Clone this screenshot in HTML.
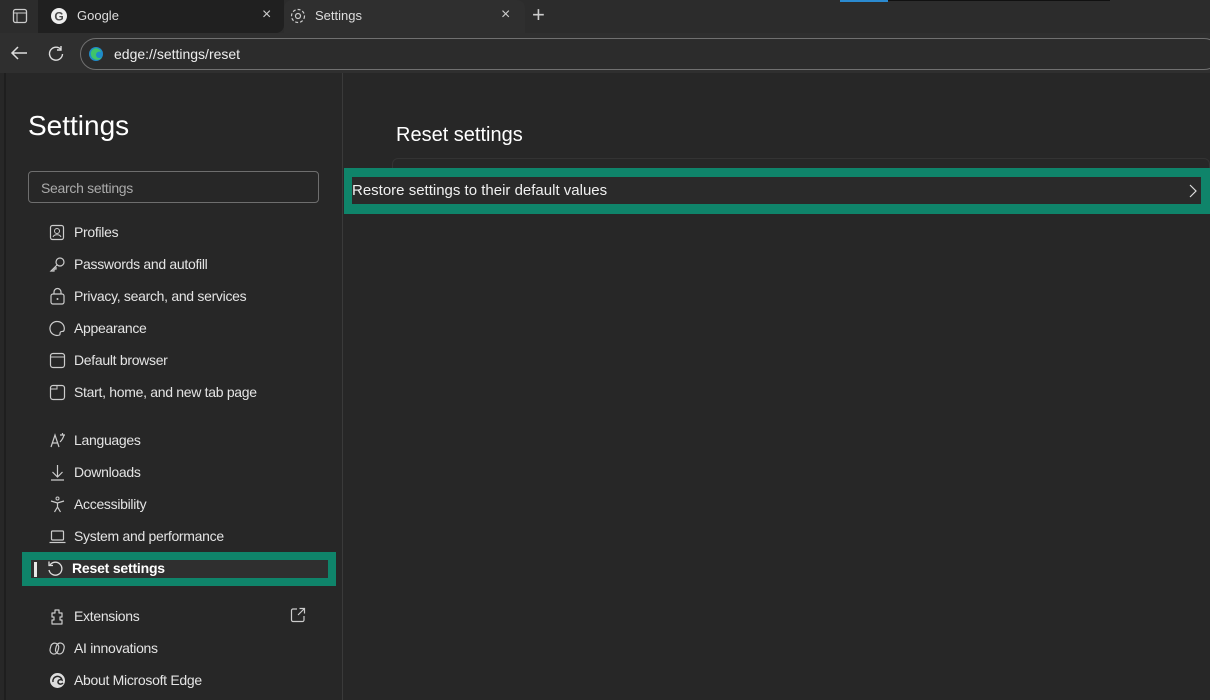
<!DOCTYPE html>
<html><head><meta charset="utf-8"><style>
*{box-sizing:border-box;margin:0;padding:0}
body{width:1210px;height:700px;overflow:hidden;background:#272727;font-family:"Segoe UI","Liberation Sans",sans-serif;color:#e8e8e8;position:relative}
.a{position:absolute}
.strip{left:0;top:0;width:1210px;height:33px;background:#2c2c2c}
.gt{left:38px;top:0;width:246px;height:33px;background:#202020;border-radius:0 0 8px 0}
.st{left:284px;top:0;width:241px;height:33px;background:#2f2f2f;border-radius:8px 8px 0 0}
.tb{left:0;top:33px;width:1210px;height:40px;background:#2f2f2f}
.addr{left:80px;top:38px;width:1140px;height:32px;border:1px solid #707070;border-radius:16px;background:#2c2c2c}
.t{font-size:13px;color:#ddd}
.side{left:0;top:73px;width:343px;height:627px;background:#272727;border-right:1px solid #3a3a3a}
.lt{left:4px;top:73px;width:2px;height:627px;background:#1e1e1e}
.item{position:absolute;left:74px;font-size:14px;color:#e4e4e4;letter-spacing:-0.3px}
.ic{position:absolute;left:49px;width:17px;height:17px}
svg{overflow:visible}
</style></head><body>
<div class="a strip"></div>
<div class="a" style="left:840px;top:0;width:48px;height:2px;background:#2b8ad0"></div>
<div class="a" style="left:888px;top:0;width:222px;height:1px;background:#111"></div>
<div class="a gt"></div>
<div class="a st"></div>
<svg class="a" style="left:12px;top:8px" width="16" height="16"><rect x="1.5" y="1.5" width="13" height="13" rx="2" fill="none" stroke="#ccc" stroke-width="1.3"/><line x1="1.5" y1="5" x2="14.5" y2="5" stroke="#ccc"/><line x1="5" y1="5" x2="5" y2="14.5" stroke="#ccc"/></svg>
<svg class="a" style="left:51px;top:8px" width="16" height="16"><circle cx="8" cy="8" r="8" fill="#eee"/><text x="8" y="12.5" font-size="12" font-weight="bold" text-anchor="middle" fill="#4a4a4a" font-family="Liberation Sans">G</text></svg>
<div class="a t" style="left:77px;top:8px">Google</div>
<div class="a" style="left:262px;top:6px;font-size:16px;color:#ccc">×</div>
<svg class="a" style="left:289px;top:7px" width="18" height="18"><circle cx="9" cy="9" r="2.5" fill="none" stroke="#ccc" stroke-width="1.2"/><circle cx="9" cy="9" r="6.5" fill="none" stroke="#ccc" stroke-width="1.2" stroke-dasharray="3 2"/></svg>
<div class="a t" style="left:315px;top:8px">Settings</div>
<div class="a" style="left:501px;top:6px;font-size:16px;color:#ccc">×</div>
<div class="a" style="left:532px;top:2px;font-size:22px;color:#ccc;font-weight:300">+</div>
<div class="a tb"></div>
<svg class="a" style="left:10px;top:45px" width="18" height="16"><path d="M17 8H2M8 2L2 8l6 6" fill="none" stroke="#ddd" stroke-width="1.5"/></svg>
<svg class="a" style="left:47px;top:45px" width="18" height="18"><path d="M14 4.5A6.5 6.5 0 1 0 15.5 9" fill="none" stroke="#ddd" stroke-width="1.4"/><path d="M14 1v4h-4" fill="none" stroke="#ddd" stroke-width="1.4"/></svg>
<div class="a addr"></div>
<svg class="a" style="left:88px;top:46px" width="16" height="16"><circle cx="8" cy="8" r="7" fill="#1f8bc9"/><path d="M3 9a5 5 0 0 1 10-3c-2-1-5 0-5 3s4 4 6 2a6 6 0 0 1-11-2z" fill="#3fc46a"/></svg>
<div class="a" style="left:114px;top:46px;font-size:14px;color:#eee">edge://settings/reset</div>
<div class="a side"></div>
<div class="a lt"></div>
<div class="a" style="left:28px;top:110px;font-size:28px;color:#fff;font-weight:500">Settings</div>
<div class="a" style="left:28px;top:171px;width:291px;height:32px;border:1px solid #6e6e6e;border-radius:4px"></div>
<div class="a" style="left:41px;top:180px;font-size:14px;color:#aaa;letter-spacing:-0.3px">Search settings</div>

<svg class="ic" style="top:224px"><rect x="1.5" y="1.5" width="13" height="14" rx="2" fill="none" stroke="#ccc" stroke-width="1.2"/><circle cx="8" cy="7" r="2.5" fill="none" stroke="#ccc"/><path d="M4 13c1-3 7-3 8 0" fill="none" stroke="#ccc"/></svg>
<div class="item" style="top:224px">Profiles</div>
<svg class="ic" style="top:256px"><circle cx="11" cy="6" r="4" fill="none" stroke="#ccc" stroke-width="1.2"/><path d="M8 9L2 15h3v-2h2v-2" fill="none" stroke="#ccc" stroke-width="1.2"/></svg>
<div class="item" style="top:256px">Passwords and autofill</div>
<svg class="ic" style="top:288px"><rect x="2" y="6" width="13" height="10" rx="2" fill="none" stroke="#ccc" stroke-width="1.2"/><path d="M5 6V4a3.5 3.5 0 0 1 7 0v2" fill="none" stroke="#ccc" stroke-width="1.2"/><circle cx="8.5" cy="11" r="1" fill="#ccc"/></svg>
<div class="item" style="top:288px">Privacy, search, and services</div>
<svg class="ic" style="top:320px"><path d="M8.5 1.5a7 7 0 1 0 2 13.5c1-.5 0-2 1-3s3 0 3.5-1.5a7 7 0 0 0-6.5-9z" fill="none" stroke="#ccc" stroke-width="1.2"/></svg>
<div class="item" style="top:320px">Appearance</div>
<svg class="ic" style="top:352px"><rect x="1.5" y="1.5" width="14" height="14" rx="2.5" fill="none" stroke="#ccc" stroke-width="1.2"/><line x1="1.5" y1="5" x2="15.5" y2="5" stroke="#ccc"/></svg>
<div class="item" style="top:352px">Default browser</div>
<svg class="ic" style="top:384px"><rect x="1.5" y="1.5" width="14" height="14" rx="2.5" fill="none" stroke="#ccc" stroke-width="1.2"/><path d="M1.5 5H8V1.5" fill="none" stroke="#ccc"/></svg>
<div class="item" style="top:384px">Start, home, and new tab page</div>
<svg class="ic" style="top:432px"><path d="M2 15L6 3l4 12M3.5 11h5M11 3h5M13.5 1v2M15 3c-1 4-3 6-4 7" fill="none" stroke="#ccc" stroke-width="1.2"/></svg>
<div class="item" style="top:432px">Languages</div>
<svg class="ic" style="top:464px"><path d="M8.5 1v12M3.5 8l5 5 5-5M2 16h13" fill="none" stroke="#ccc" stroke-width="1.2"/></svg>
<div class="item" style="top:464px">Downloads</div>
<svg class="ic" style="top:496px"><circle cx="8.5" cy="2.5" r="1.5" fill="none" stroke="#ccc"/><path d="M2 5l6.5 2 6.5-2M8.5 7v4l-3 5M8.5 11l3 5" fill="none" stroke="#ccc" stroke-width="1.2"/></svg>
<div class="item" style="top:496px">Accessibility</div>
<svg class="ic" style="top:528px"><rect x="2.5" y="3" width="12" height="9" rx="1" fill="none" stroke="#ccc" stroke-width="1.2"/><line x1="0.5" y1="14.5" x2="16.5" y2="14.5" stroke="#ccc" stroke-width="1.2"/></svg>
<div class="item" style="top:528px">System and performance</div>

<div class="a" style="left:22px;top:552px;width:314px;height:34px;background:#0f846a"></div>
<div class="a" style="left:31px;top:560px;width:297px;height:18px;background:#2f2f2f"></div>
<div class="a" style="left:34px;top:562px;width:3px;height:15px;background:#e8e8e8"></div>
<svg class="a" style="left:46px;top:560px" width="18" height="18"><path d="M4 5a6.5 6.5 0 1 1-1 5" fill="none" stroke="#ddd" stroke-width="1.3"/><path d="M3 1.5V5.5h4" fill="none" stroke="#ddd" stroke-width="1.3"/></svg>
<div class="a" style="left:72px;top:560px;font-size:14px;color:#fff;font-weight:bold;letter-spacing:-0.2px">Reset settings</div>

<svg class="ic" style="top:608px"><path d="M6 2h4v3h3v4h-2v3h2v4H3v-4h2V9H3V5h3z" fill="none" stroke="#ccc" stroke-width="1.2" stroke-linejoin="round"/></svg>
<div class="item" style="top:608px">Extensions</div>
<svg class="a" style="left:290px;top:607px" width="16" height="16"><path d="M7 2H3a1.5 1.5 0 0 0-1.5 1.5v9.5A1.5 1.5 0 0 0 3 14.5h9.5A1.5 1.5 0 0 0 14 13V9M9.5 1.5h5v5M14.5 1.5L8 8" fill="none" stroke="#ccc" stroke-width="1.2"/></svg>
<svg class="ic" style="top:640px"><rect x="1.5" y="3" width="8" height="11" rx="4" fill="none" stroke="#ccc" stroke-width="1.2" transform="rotate(15 5 8)"/><rect x="7" y="3" width="8" height="11" rx="4" fill="none" stroke="#ccc" stroke-width="1.2" transform="rotate(15 11 8)"/></svg>
<div class="item" style="top:640px">AI innovations</div>
<svg class="ic" style="top:672px"><circle cx="8.5" cy="8.5" r="7.5" fill="#ddd"/><path d="M4 10a4.5 4.5 0 0 1 9-2c-2-1-4 0-4 2s3 3 5 1" fill="none" stroke="#272727" stroke-width="1.5"/></svg>
<div class="item" style="top:672px">About Microsoft Edge</div>

<div class="a" style="left:396px;top:124px;font-size:20px;color:#fff;font-weight:500">Reset settings</div>
<div class="a" style="left:392px;top:158px;width:818px;height:50px;border:1px solid #333;border-radius:6px"></div>
<div class="a" style="left:344px;top:168px;width:866px;height:46px;background:#0f846a"></div>
<div class="a" style="left:352px;top:177px;width:849px;height:27px;background:#2a2a2a"></div>
<div class="a" style="left:352px;top:182px;font-size:15px;color:#f0f0f0">Restore settings to their default values</div>
<svg class="a" style="left:1189px;top:184px" width="8" height="14"><path d="M1 1l6 6-6 6" fill="none" stroke="#ddd" stroke-width="1.2"/></svg>
</body></html>
